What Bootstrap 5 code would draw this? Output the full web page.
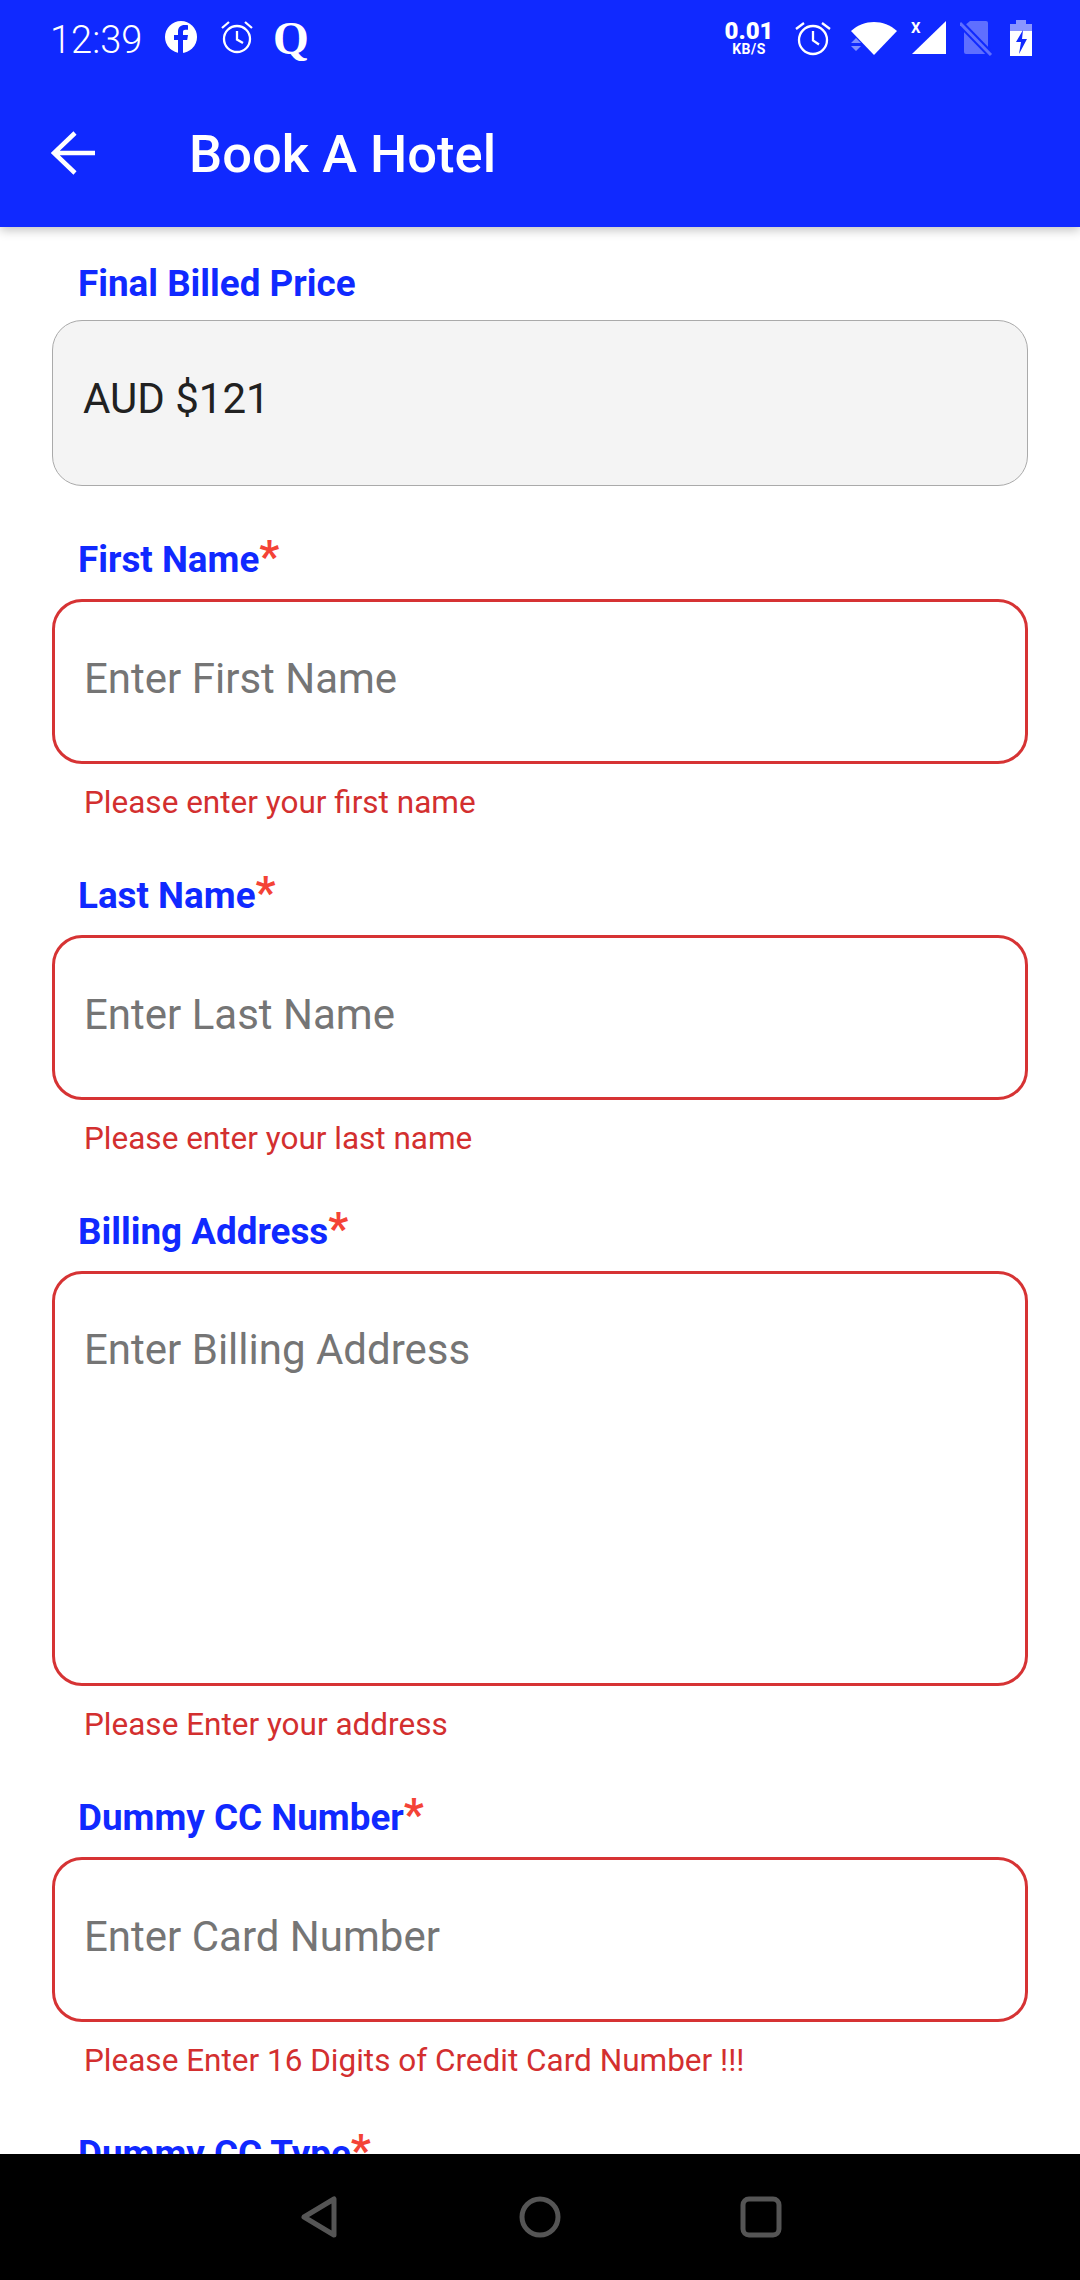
<!DOCTYPE html>
<html lang="en">
<head>
  <meta charset="UTF-8" />
  <meta name="viewport" content="width=device-width, initial-scale=1" />
  <title>Book A Hotel</title>
  <link rel="stylesheet" href="https://cdn.jsdelivr.net/npm/bootstrap@5.3.3/dist/css/bootstrap.min.css" />
  <style>
    html, body { height: 2280px; overflow: hidden; }
    body { font-family: Roboto, "Liberation Sans", sans-serif; background: #fff; }
    .screen { width: 1080px; height: 2280px; }
    .app-head { height: 227px; background: #1029ff; color: #fff; box-shadow: 0 3px 10px rgba(0,0,0,.25); position: relative; z-index: 2; flex: none; }
    .status-row { height: 80px; padding: 20px 48px 0 50px; }
    .clock { font-size: 38px; font-weight: 300; line-height: 40px; width: 114px; }
    .alarm-left { margin-left: 22px; }
    .q-mark { font-family: "Liberation Serif", serif; font-weight: 700; font-size: 46px; line-height: 38px; width: 34px; margin-left: 19px; }
    .speed { width: 50px; text-align: center; font-weight: 700; line-height: 1; margin-right: 21px; }
    .speed b { display: block; font-size: 24px; line-height: 22px; }
    .speed i { display: block; font-style: normal; font-size: 14px; line-height: 14px; letter-spacing: .5px; }
    .wifi-ico { margin-left: 19px; }
    .bars-ico { margin-left: 13px; }
    .sim-ico { margin-left: 13px; }
    .title-row { height: 147px; padding: 1px 0 0 51px; }
    .back-ico { margin-bottom: 2px; }
    .page-title { font-size: 52.5px; font-weight: 500; margin: 0 0 0 94px; line-height: 60px; }
    .form-pane { flex: 1 1 auto; overflow: hidden; padding: 36px 52px 0; min-height: 0; }
    .fld-label { display: block; color: #1029ff; font-size: 36.8px; font-weight: 700; line-height: 42px; padding-left: 26px; margin: 0 0 15px; }
    .fld-label.req { margin-bottom: 18px; }
    .fld-label span { color: #f44336; font-size: 44px; font-weight: 700; line-height: 30px; }
    .fld-input.form-control { height: 165px; border: 3px solid #d63334; border-radius: 30px; padding: 0 29px 6px; font-size: 42px; color: #212121; box-shadow: none; }
    .fld-input.form-control::placeholder { color: #757575; opacity: 1; }
    .fld-input.area { height: 415px; padding: 44px 29px; resize: none; }
    .fld-input.paid { background: #f4f4f4; border: 1.5px solid #aaa; height: 166px; padding: 0 30px 10px; }
    .fld-err { color: #d32f2f; font-size: 31.5px; line-height: 36px; padding-left: 32px; margin-top: 21px; }
    .entry-one { margin-top: 53px; }
    .entry-two { margin-top: 54px; }
    .nav-keys { height: 126px; background: #000; flex: none; position: relative; z-index: 2; }
    .nav-keys svg { display: block; }
    .key-mid { margin: 0 177px; }
  </style>
</head>
<body>
  <div class="screen d-flex flex-column">
    <header class="app-head">
      <div class="status-row d-flex align-items-start">
        <span class="clock">12:39</span>
        <svg width="34" height="34" viewBox="0 0 34 34"><circle cx="17" cy="17" r="16" fill="#fff"/><path d="M19 33V20h4.200l.8-5h-5v-3c0-1.500.7-2.300 2.400-2.300H24V5.300C23.200 5.200 22 5 20.600 5 16.700 5 14 7.300 14 11.600V15H10v5h4v13z" fill="#1029ff"/></svg>
        <svg class="alarm-left" width="34" height="34" viewBox="0 0 34 34" fill="none" stroke="#fff" stroke-width="2.300"><circle cx="17" cy="19" r="13"/><path d="M17 11v8.500l6 3.500M2 8l7-6M32 8l-7-6"/></svg>
        <span class="q-mark">Q</span>
        <div class="ms-auto d-flex align-items-start">
          <div class="speed"><b>0.01</b><i>KB/S</i></div>
          <svg width="36" height="36" viewBox="0 0 36 36" fill="none" stroke="#fff" stroke-width="2.300"><circle cx="18" cy="20" r="14"/><path d="M18 11v9.500l6 4M1 9l8-6M35 9l-8-6"/></svg>
          <svg class="wifi-ico" width="48" height="36" viewBox="0 0 48 36"><path d="M1 11C14-1 34-1 47 11L24 35z" fill="#fff"/><path d="M1 23h10l-5-5zM1 26h10l-5 5z" fill="#7f8dff"/></svg>
          <svg class="bars-ico" width="36" height="36" viewBox="0 0 36 36"><path d="M35 1v33H1z" fill="#fff"/><text x="0" y="13" fill="#fff" font-size="15" font-weight="700" font-family="Roboto">X</text></svg>
          <svg class="sim-ico" width="34" height="36" viewBox="0 0 34 36"><path d="M4 6v26q0 2 2 2h20q2 0 2-2V3q0-2-2-2H10z" fill="#5f6fff"/><path d="M0 3l31 32" stroke="#1029ff" stroke-width="7"/><path d="M0 3l31 32" stroke="#5f6fff" stroke-width="3"/></svg>
          <svg class="ms-3" width="22" height="36" viewBox="0 0 22 36"><path d="M6 0h10v4h6v10H0V4h6z" fill="#8a96ff"/><path d="M0 11h22v25H0z" fill="#fff"/><path d="M13 10 6 22h5l-2 12 8-15h-5z" fill="#1029ff"/></svg>
        </div>
      </div>
      <div class="title-row d-flex align-items-center">
        <svg class="back-ico" width="44" height="44" viewBox="0 0 44 44" fill="none" stroke="#fff" stroke-width="4.500"><path d="M44 22H3M24 2 3 22l21 20"/></svg>
        <h1 class="page-title">Book A Hotel</h1>
      </div>
    </header>

    <main class="form-pane">
      <form>
        <div>
          <label class="fld-label">Final Billed Price</label>
          <input class="form-control fld-input paid" value="AUD $121" readonly />
        </div>
        <div class="entry-one">
          <label class="fld-label req">First Name<span>*</span></label>
          <input class="form-control fld-input" placeholder="Enter First Name" />
          <div class="fld-err">Please enter your first name</div>
        </div>
        <div class="entry-two">
          <label class="fld-label req">Last Name<span>*</span></label>
          <input class="form-control fld-input" placeholder="Enter Last Name" />
          <div class="fld-err">Please enter your last name</div>
        </div>
        <div class="entry-two">
          <label class="fld-label req">Billing Address<span>*</span></label>
          <textarea class="form-control fld-input area" placeholder="Enter Billing Address"></textarea>
          <div class="fld-err">Please Enter your address</div>
        </div>
        <div class="entry-two">
          <label class="fld-label req">Dummy CC Number<span>*</span></label>
          <input class="form-control fld-input" placeholder="Enter Card Number" />
          <div class="fld-err">Please Enter 16 Digits of Credit Card Number !!!</div>
        </div>
        <div class="entry-two">
          <label class="fld-label req">Dummy CC Type<span>*</span></label>
        </div>
      </form>
    </main>

    <footer class="nav-keys d-flex justify-content-center align-items-center">
      <svg width="44" height="44" viewBox="0 0 44 44" fill="none" stroke="#555" stroke-width="5" stroke-linejoin="round"><path d="M37 4v36L7 22z"/></svg>
      <svg class="key-mid" width="44" height="44" viewBox="0 0 44 44" fill="none" stroke="#555" stroke-width="5"><circle cx="22" cy="22" r="18"/></svg>
      <svg width="44" height="44" viewBox="0 0 44 44" fill="none" stroke="#555" stroke-width="5"><rect x="4" y="4" width="36" height="36" rx="6"/></svg>
    </footer>
  </div>
</body>
</html>
